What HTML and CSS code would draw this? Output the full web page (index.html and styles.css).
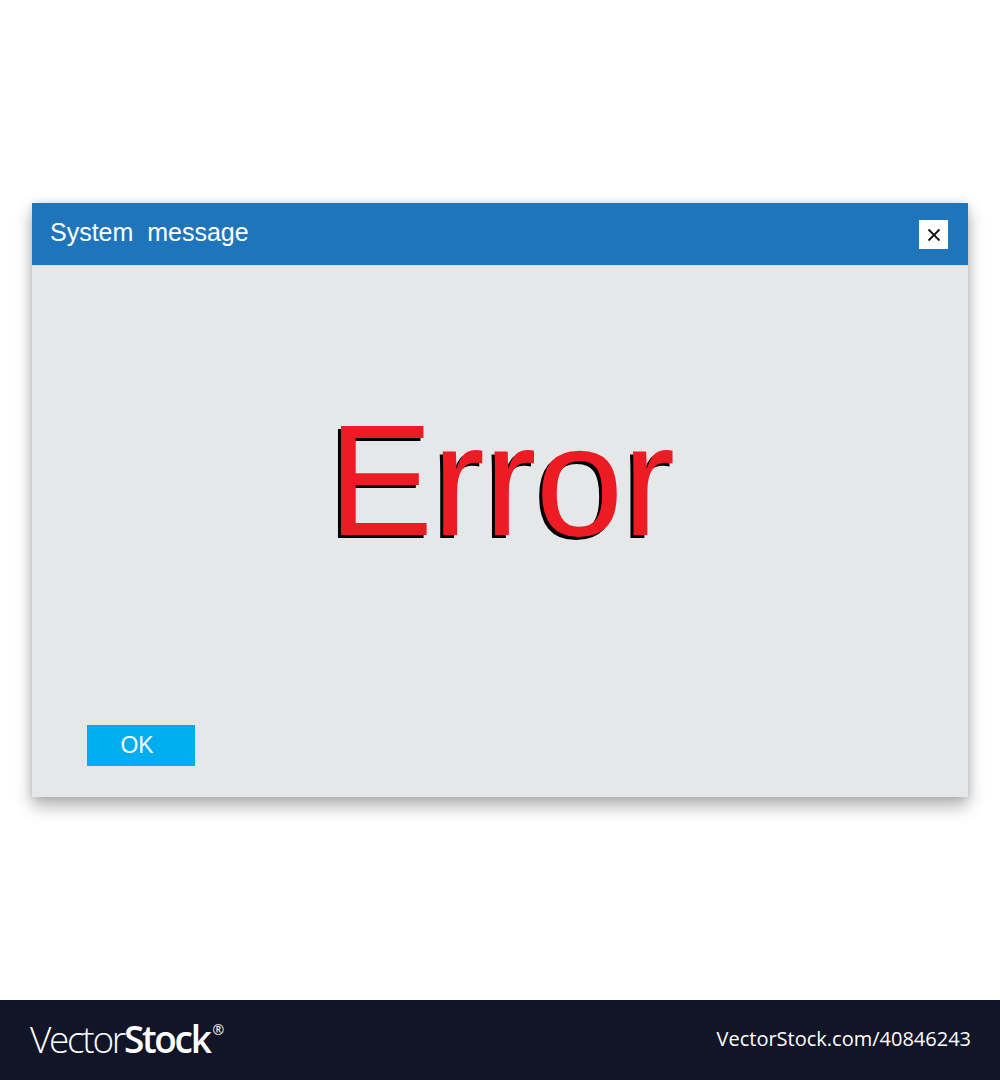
FILE: index.html
```html
<!DOCTYPE html>
<html lang="en">
<head>
  <meta charset="UTF-8">
  <title>System message</title>
  <link rel="stylesheet" href="styles.css">
</head>
<body>
  <div class="page">
    <div class="dialog">
      <div class="titlebar">
        <span class="title">System&nbsp; message</span>
        <button class="close" aria-label="Close">
          <svg width="14" height="14" viewBox="0 0 14 14">
            <path d="M1.5 1.5 L12.5 12.5 M12.5 1.5 L1.5 12.5" stroke="#111" stroke-width="1.8" fill="none"/>
          </svg>
        </button>
      </div>
      <div class="content">
        <div class="message">Error</div>
        <div class="actions">
          <button class="ok">OK</button>
        </div>
      </div>
    </div>
  </div>

  <div class="footer">
    <div class="logo"><span class="thin">Vector</span><span class="bold">Stock</span><sup>®</sup></div>
    <div class="ref">VectorStock.com/40846243</div>
  </div>
</body>
</html>
```

FILE: styles.css
```css
body {
  margin: 0;
  background: #fff;
  font-family: "Liberation Sans", Arial, sans-serif;
}
.page {
  height: 1000px;
  padding: 203px 32px 0;
  box-sizing: border-box;
}
.dialog {
  width: 936px;
  height: 594px;
  background: #e6e7e9;
  display: flex;
  flex-direction: column;
  box-shadow: 0 9px 16px rgba(0, 0, 0, 0.3), 0 0 8px rgba(0, 0, 0, 0.12);
}
.titlebar {
  height: 62px;
  background: #1f75bc;
  display: flex;
  align-items: center;
  justify-content: space-between;
  padding: 0 20px 0 18px;
  border-bottom: 1px solid #d6dbe2;
}
.title {
  color: #fff;
  font-size: 25px;
  margin-top: -3px;
}
.close {
  width: 29px;
  height: 29px;
  background: #fff;
  border: 0;
  padding: 0;
  display: flex;
  align-items: center;
  justify-content: center;
  margin-top: 1px;
}
.content {
  flex: 1;
  display: flex;
  flex-direction: column;
}
.message {
  text-align: center;
  font-size: 158px;
  letter-spacing: -1px;
  color: #ed1c24;
  text-shadow: -3px 3px 0 #000;
  margin-top: 135px;
  padding-left: 2px;
  line-height: 1;
}
.actions {
  margin-top: auto;
  padding: 0 0 31px 55px;
}
.ok {
  width: 108px;
  height: 41px;
  background: #00adee;
  border: 0;
  color: #fff;
  font-family: "Liberation Sans", Arial, sans-serif;
  font-size: 23px;
  padding: 0 8px 0 0;
}
.footer {
  height: 80px;
  background: #121427;
  display: flex;
  align-items: center;
  justify-content: space-between;
  padding: 0 29px 0 30px;
  color: #fff;
}
.logo {
  font-family: "Open Sans", sans-serif;
  font-size: 37px;
  letter-spacing: -2.3px;
  margin-top: -4px;
}
.logo .thin {
  font-weight: 300;
}
.logo .bold {
  font-weight: 600;
}
.logo sup {
  font-size: 14px;
  font-weight: 400;
  vertical-align: 18px;
  margin-left: 3px;
}
.ref {
  font-family: "Open Sans", sans-serif;
  font-size: 20px;
  margin-top: -4px;
}
```
